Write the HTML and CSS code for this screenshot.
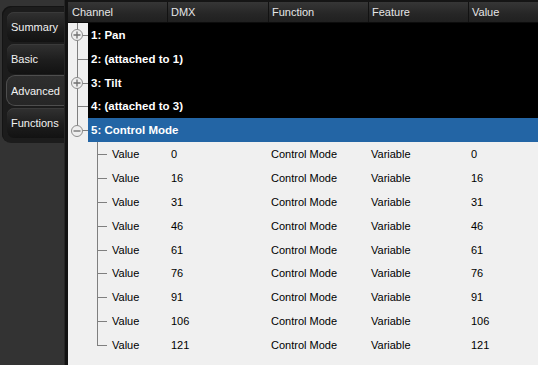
FILE: index.html
```html
<!DOCTYPE html>
<html>
<head>
<meta charset="utf-8">
<link rel="stylesheet" href="styles.css">
</head>
<body>
<div class="app">
  <aside class="side">
    <div class="tabs">
      <div class="tab">Summary</div>
      <div class="tab">Basic</div>
      <div class="tab sel">Advanced</div>
      <div class="tab">Functions</div>
    </div>
  </aside>
  <div class="divider"></div>
  <main class="view">
    <div class="head">
      <div class="hc first">Channel</div>
      <div class="hc">DMX</div>
      <div class="hc">Function</div>
      <div class="hc">Feature</div>
      <div class="hc last">Value</div>
    </div>
    <div class="tree">
      <div class="row">
        <div class="gut mid"><svg class="exp" viewBox="0 0 12 12" width="12" height="12"><circle cx="6" cy="6" r="5.5" class="ring"/><path d="M2.5 6H9.5M6 2.5V9.5" class="sign"/></svg></div>
        <div class="body dark"><span class="lbl">1: Pan</span></div>
      </div>
      <div class="row">
        <div class="gut mid"></div>
        <div class="body dark"><span class="lbl">2: (attached to 1)</span></div>
      </div>
      <div class="row">
        <div class="gut mid"><svg class="exp" viewBox="0 0 12 12" width="12" height="12"><circle cx="6" cy="6" r="5.5" class="ring"/><path d="M2.5 6H9.5M6 2.5V9.5" class="sign"/></svg></div>
        <div class="body dark"><span class="lbl">3: Tilt</span></div>
      </div>
      <div class="row">
        <div class="gut mid"></div>
        <div class="body dark"><span class="lbl">4: (attached to 3)</span></div>
      </div>
      <div class="row">
        <div class="gut last"><svg class="exp" viewBox="0 0 12 12" width="12" height="12"><circle cx="6" cy="6" r="5.5" class="ring"/><path d="M2.5 6H9.5" class="sign"/></svg></div>
        <div class="body sel"><span class="lbl">5: Control Mode</span></div>
      </div>

      <div class="row child"><div class="gut"></div><div class="body"><div class="c1"><span class="cg mid"></span>Value</div><div class="cell">0</div><div class="cell">Control Mode</div><div class="cell">Variable</div><div class="cell">0</div></div></div>
      <div class="row child"><div class="gut"></div><div class="body"><div class="c1"><span class="cg mid"></span>Value</div><div class="cell">16</div><div class="cell">Control Mode</div><div class="cell">Variable</div><div class="cell">16</div></div></div>
      <div class="row child"><div class="gut"></div><div class="body"><div class="c1"><span class="cg mid"></span>Value</div><div class="cell">31</div><div class="cell">Control Mode</div><div class="cell">Variable</div><div class="cell">31</div></div></div>
      <div class="row child"><div class="gut"></div><div class="body"><div class="c1"><span class="cg mid"></span>Value</div><div class="cell">46</div><div class="cell">Control Mode</div><div class="cell">Variable</div><div class="cell">46</div></div></div>
      <div class="row child"><div class="gut"></div><div class="body"><div class="c1"><span class="cg mid"></span>Value</div><div class="cell">61</div><div class="cell">Control Mode</div><div class="cell">Variable</div><div class="cell">61</div></div></div>
      <div class="row child"><div class="gut"></div><div class="body"><div class="c1"><span class="cg mid"></span>Value</div><div class="cell">76</div><div class="cell">Control Mode</div><div class="cell">Variable</div><div class="cell">76</div></div></div>
      <div class="row child"><div class="gut"></div><div class="body"><div class="c1"><span class="cg mid"></span>Value</div><div class="cell">91</div><div class="cell">Control Mode</div><div class="cell">Variable</div><div class="cell">91</div></div></div>
      <div class="row child"><div class="gut"></div><div class="body"><div class="c1"><span class="cg mid"></span>Value</div><div class="cell">106</div><div class="cell">Control Mode</div><div class="cell">Variable</div><div class="cell">106</div></div></div>
      <div class="row child"><div class="gut"></div><div class="body"><div class="c1"><span class="cg last"></span>Value</div><div class="cell">121</div><div class="cell">Control Mode</div><div class="cell">Variable</div><div class="cell">121</div></div></div>
    </div>
  </main>
</div>
</body>
</html>
```

FILE: styles.css
```css
* { box-sizing: border-box; }
html, body { margin: 0; padding: 0; }
body {
  width: 538px;
  height: 365px;
  overflow: hidden;
  background: #333333;
  font-family: "Liberation Sans", Arial, sans-serif;
  font-size: 11px;
}
.app {
  display: flex;
  height: 365px;
}
.side {
  width: 64px;
  flex: none;
  padding: 6px 0 0 2px;
}
.tabs {
  background: #1c1c1c;
  border-radius: 9px 0 0 9px;
  height: 137px;
  padding: 6px 0 0 5px;
  display: flex;
  flex-direction: column;
  gap: 2px;
  box-shadow: inset 1px 1px 0 #141414;
}
.tab {
  height: 30px;
  display: flex;
  align-items: center;
  padding-left: 4px;
  color: #f2f2f2;
  background: linear-gradient(#313131, #1d1d1d 55%, #121212);
  border-radius: 7px 0 0 7px;
  box-shadow: inset 0 1px 0 #3a3a3a;
}
.tab.sel {
  margin-left: -1px;
  height: 31px;
  margin-top: -1px;
  background: linear-gradient(#2e2e2e, #262626);
  border: 1px solid #4e4e4e;
  border-right: none;
  border-radius: 9px 0 0 9px;
  box-shadow: none;
}
.divider {
  width: 4px;
  flex: none;
  background: #121212;
  border-left: 1px solid #262626;
}
.view {
  flex: 1;
  display: flex;
  flex-direction: column;
  background: #f0f0f0;
  min-width: 0;
}
.head {
  height: 23px;
  flex: none;
  display: flex;
  background: linear-gradient(#363636, #262626 60%, #202020);
  border-top: 2px solid #151515;
  border-bottom: 1px solid #0c0c0c;
  color: #e6e6e6;
}
.hc {
  width: 100px;
  display: flex;
  align-items: center;
  padding-left: 3px;
  border-left: 1px solid #121212;
}
.hc.first {
  width: 100px;
  padding-left: 4px;
  border-left: none;
  border-right: 1px solid #121212;
}
.hc.first + .hc { border-left: none; }
.hc.last { flex: 1; }
.tree {
  display: flex;
  flex-direction: column;
}
.row {
  height: 23.85px;
  display: flex;
}
.gut {
  width: 20px;
  flex: none;
  position: relative;
}
.gut.mid::before, .gut.last::before,
.cg::before {
  content: "";
  position: absolute;
  left: 9px;
  top: 0;
  width: 1px;
  bottom: 0;
  background: #7f7f7f;
}
.gut.last::before, .cg.last::before { bottom: 50%; }
.gut.mid::after, .gut.last::after,
.cg::after {
  content: "";
  position: absolute;
  left: 9px;
  top: 50%;
  width: 11px;
  height: 1px;
  background: #7f7f7f;
}
.exp {
  position: absolute;
  left: 3px;
  top: calc(50% - 5.5px);
  z-index: 1;
}
.ring {
  fill: #eeeeee;
  stroke: #8c8c8c;
  stroke-width: 1;
}
.sign {
  stroke: #6f6f6f;
  stroke-width: 1.3;
}
.body {
  flex: 1;
  display: grid;
  grid-template-columns: 80px 100px 100px 100px 1fr;
  align-items: center;
  color: #000;
}
.body.dark { background: #000; }
.body.sel { background: #2365a5; }
.lbl {
  grid-column: 1 / -1;
  padding-left: 3px;
  color: #ffffff;
  font-weight: bold;
  font-size: 11.5px;
  white-space: nowrap;
}
.c1 {
  display: flex;
  align-items: center;
  height: 100%;
}
.cg {
  position: relative;
  width: 24px;
  height: 100%;
  flex: none;
}
.cg::after { width: 10px; }
.cell {
  padding-left: 3px;
  white-space: nowrap;
}
```
